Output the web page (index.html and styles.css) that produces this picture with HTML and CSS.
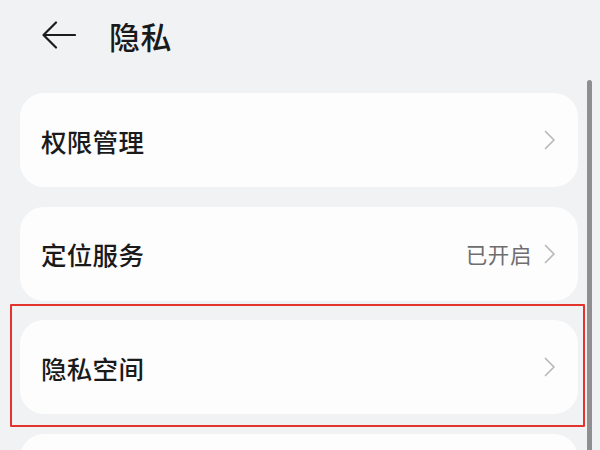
FILE: index.html
```html
<!DOCTYPE html>
<html lang="zh-CN">
<head>
<meta charset="utf-8">
<title>隐私</title>
<link rel="stylesheet" href="styles.css">
</head>
<body>
<div class="page">
  <header class="header">
    <svg class="back" width="34" height="28" viewBox="0 0 34 28" aria-hidden="true">
      <path d="M14 1.5 L1.5 14 L14 26.5 M1.5 14 H33" fill="none" stroke="#1c1c1c" stroke-width="2.2" stroke-linecap="round" stroke-linejoin="round"/>
    </svg>
    <h1 class="title">隐私</h1>
  </header>
  <ul class="list">
    <li class="card"><span class="label">权限管理</span><span class="right"><svg class="chev" width="12" height="20" viewBox="0 0 12 20"><path d="M1.5 1.5 L10 10 L1.5 18.5" fill="none" stroke="#b9b9bb" stroke-width="1.7" stroke-linecap="round" stroke-linejoin="round"/></svg></span></li>
    <li class="card"><span class="label">定位服务</span><span class="right"><span class="value">已开启</span><svg class="chev" width="12" height="20" viewBox="0 0 12 20"><path d="M1.5 1.5 L10 10 L1.5 18.5" fill="none" stroke="#b9b9bb" stroke-width="1.7" stroke-linecap="round" stroke-linejoin="round"/></svg></span></li>
    <li class="card"><span class="label">隐私空间</span><span class="right"><svg class="chev" width="12" height="20" viewBox="0 0 12 20"><path d="M1.5 1.5 L10 10 L1.5 18.5" fill="none" stroke="#b9b9bb" stroke-width="1.7" stroke-linecap="round" stroke-linejoin="round"/></svg></span></li>
    <li class="card"><span class="label"></span></li>
  </ul>
  <div class="highlight"></div>
  <div class="scrollbar"></div>
</div>
</body>
</html>
```

FILE: styles.css
```css
html, body {
  margin: 0;
  padding: 0;
  background: #f1f2f4;
}
body {
  font-family: "Noto Sans CJK SC", "Noto Sans", sans-serif;
  color: #1a1a1a;
}
.page {
  position: relative;
  width: 600px;
  height: 450px;
  overflow: hidden;
}
.header {
  height: 70px;
  display: flex;
  align-items: center;
  padding-left: 42px;
}
.back {
  display: block;
  margin-top: -1px;
}
.title {
  margin: 0 0 0 33px;
  font-size: 31px;
  font-weight: 500;
  line-height: 1;
  letter-spacing: 0.5px;
}
.list {
  list-style: none;
  margin: 23px 0 0 20px;
  padding: 0;
  width: 558px;
  display: flex;
  flex-direction: column;
  gap: 19.5px;
}
.card {
  height: 94px;
  background: #fdfdfd;
  border-radius: 24px;
  display: flex;
  align-items: center;
  justify-content: space-between;
  padding: 0 22px 0 21px;
  box-sizing: border-box;
}
.label {
  font-size: 25.5px;
  font-weight: 500;
  letter-spacing: 0.3px;
  color: #1a1a1a;
}
.right {
  display: flex;
  align-items: center;
  gap: 12px;
}
.value {
  font-size: 21.5px;
  color: #6e6e6e;
  letter-spacing: 0.6px;
}
.chev {
  display: block;
}
.highlight {
  position: absolute;
  left: 10px;
  top: 304px;
  width: 575px;
  height: 123px;
  box-sizing: border-box;
  border: 2px solid #e3332e;
  border-radius: 1px;
}
.scrollbar {
  position: absolute;
  left: 587px;
  top: 80px;
  bottom: 0;
  width: 5px;
  background: #8f8f91;
  border-radius: 3px 3px 0 0;
}
```
